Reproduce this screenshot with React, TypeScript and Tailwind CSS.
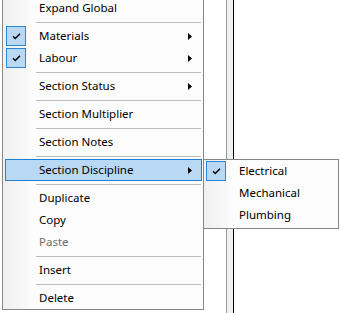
import clsx from "clsx";

type Item =
  | { sep: true }
  | {
      sep?: false;
      label: string;
      checked?: boolean;
      sub?: boolean;
      active?: boolean;
      disabled?: boolean;
    };

const mainItems: Item[] = [
  { label: "Expand Global" },
  { sep: true },
  { label: "Materials", checked: true, sub: true },
  { label: "Labour", checked: true, sub: true },
  { sep: true },
  { label: "Section Status", sub: true },
  { sep: true },
  { label: "Section Multiplier" },
  { sep: true },
  { label: "Section Notes" },
  { sep: true },
  { label: "Section Discipline", sub: true, active: true },
  { sep: true },
  { label: "Duplicate" },
  { label: "Copy" },
  { label: "Paste", disabled: true },
  { sep: true },
  { label: "Insert" },
  { sep: true },
  { label: "Delete" },
];

const subItems: Item[] = [
  { label: "Electrical", checked: true },
  { label: "Mechanical" },
  { label: "Plumbing" },
];

function Check() {
  return (
    <svg width="9" height="7" viewBox="0 0 9 7" className="block">
      <path d="M1 3.2 L3.3 5.5 L8 0.8" fill="none" stroke="#000" strokeWidth="1.5" />
    </svg>
  );
}

function Arrow() {
  return (
    <svg width="4" height="7" viewBox="0 0 4 7" className="block">
      <polygon points="0,0 4,3.5 0,7" fill="#000" />
    </svg>
  );
}

function Row({ item }: { item: Item }) {
  if (item.sep) {
    return (
      <div className="h-[6px] flex items-center">
        <div className="h-px flex-1 bg-[#bdbdbd] ml-[31px] mr-[1px]" />
      </div>
    );
  }
  return (
    <div
      className={clsx(
        "h-[22px] flex items-center border",
        item.active ? "bg-[#b8d8f4] border-[#1f7fd6]" : "border-transparent",
      )}
    >
      <div className="w-[33px] h-full flex items-center">
        {item.checked && (
          <div className="w-[20px] h-[20px] bg-[#b8d8f4] border border-[#2a86d8] flex items-center justify-center">
            <Check />
          </div>
        )}
      </div>
      <span
        className={clsx(
          "flex-1 leading-none",
          item.disabled ? "text-[#6d6d6d]" : "text-black",
        )}
      >
        {item.label}
      </span>
      {item.sub && (
        <div className="pr-[9px]">
          <Arrow />
        </div>
      )}
    </div>
  );
}

export default function App() {
  return (
    <div
      className="relative w-[341px] h-[313px] overflow-hidden bg-white flex items-start text-[11.5px]"
      style={{ fontFamily: '"Noto Sans", "Liberation Sans", sans-serif' }}
    >
      {/* main context menu */}
      <div className="ml-[2px] -mt-[6px] w-[202px] border border-[#868686] pt-[2px] bg-[linear-gradient(to_right,#f0f0f0_0px,#f9f9f9_25px,#fcfcfc_25px)]">
        <div className="ml-[2px] mr-[1px]">
          {mainItems.map((it, i) => (
            <Row key={i} item={it} />
          ))}
        </div>
      </div>

      {/* splitter behind */}
      <div className="ml-[22px] w-[8px] self-stretch border-l border-[#8d9aab] border-r border-r-black bg-[#f0f0f0]" />

      {/* submenu */}
      <div className="absolute left-[203px] top-[159px] w-[136px] h-[70px] border border-[#868686] bg-[linear-gradient(to_right,#f0f0f0_0px,#f9f9f9_24px,#fcfcfc_24px)]">
        <div className="ml-[1px] mr-[1px]">
          {subItems.map((it, i) => (
            <Row key={i} item={it} />
          ))}
        </div>
      </div>
    </div>
  );
}
